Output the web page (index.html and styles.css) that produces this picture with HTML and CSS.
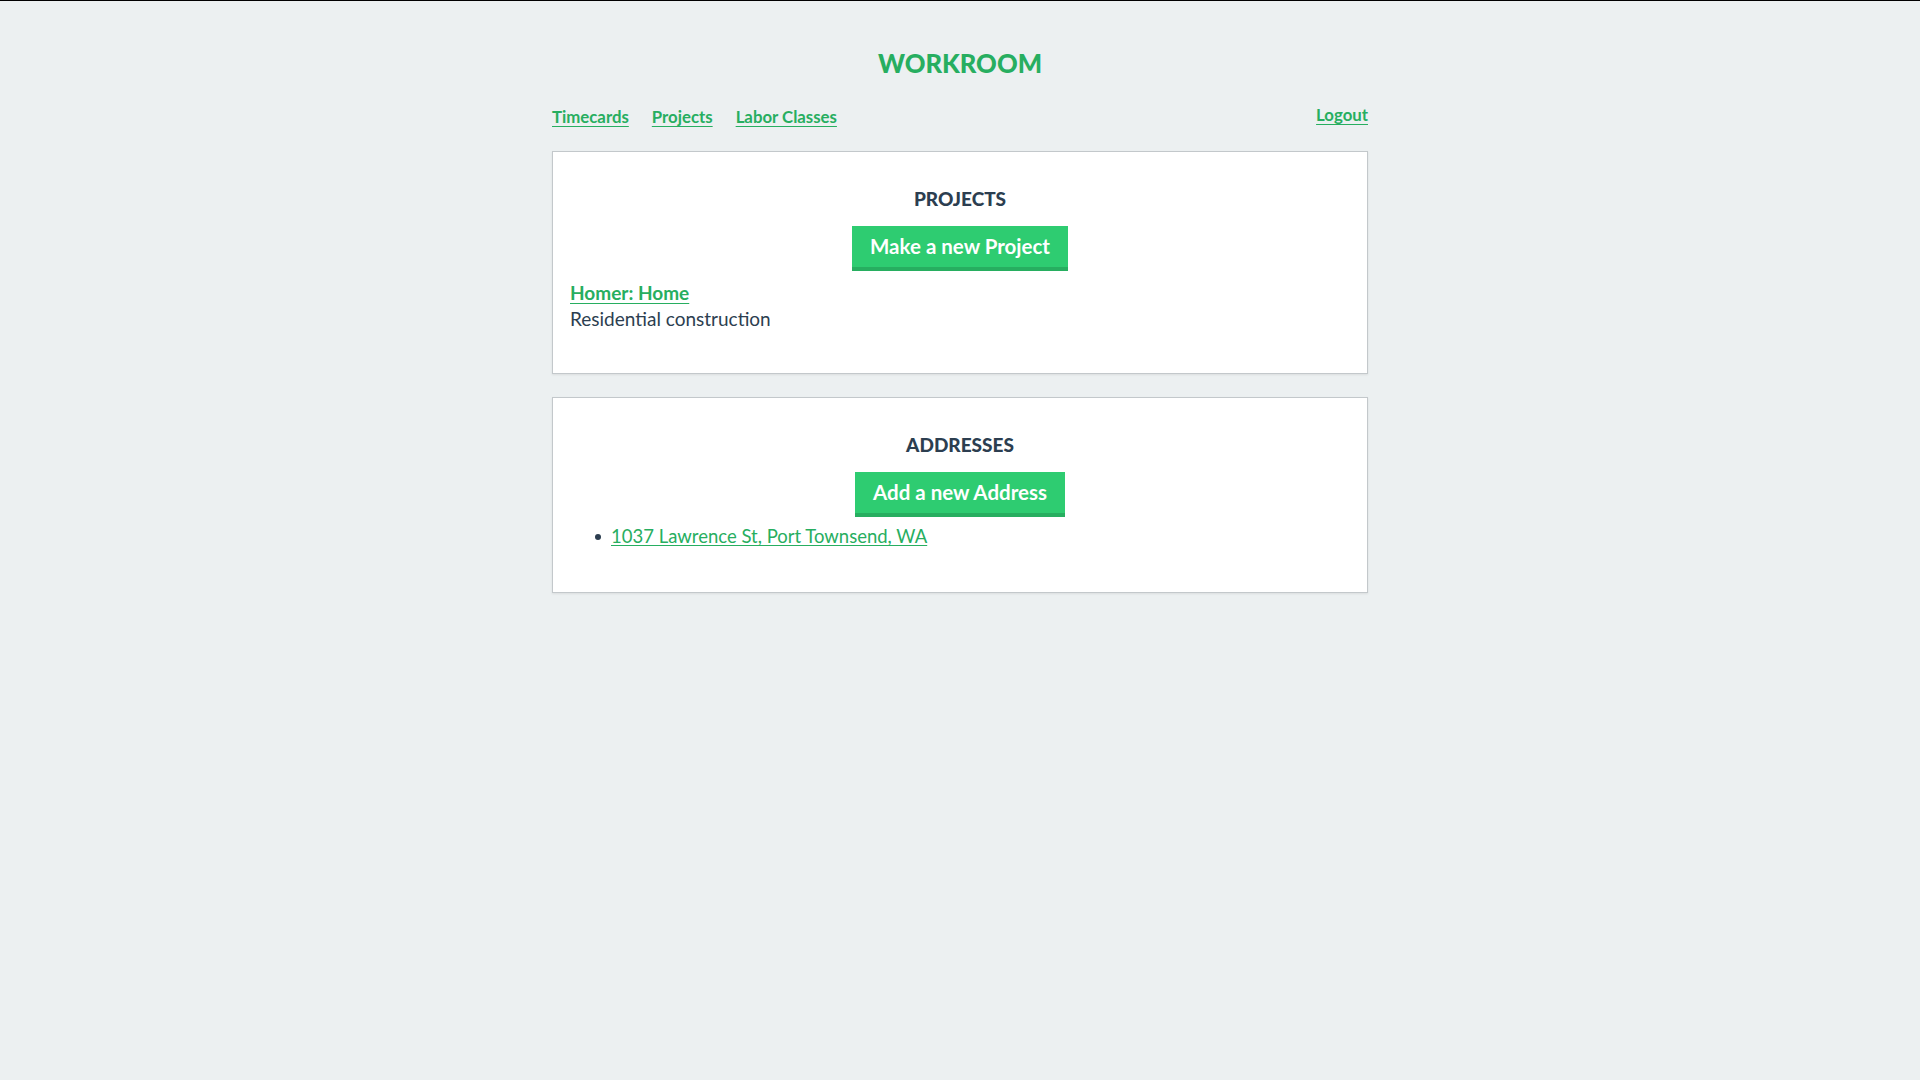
FILE: index.html
```html
<!DOCTYPE html>
<html lang="en">
<head>
<meta charset="utf-8">
<title>Workroom</title>
<link rel="stylesheet" href="styles.css">
</head>
<body>
<div class="container">
  <header class="header">
    <h1 class="brand">WORKROOM</h1>
    <nav class="nav">
      <div class="nav-left">
        <a class="nav-link" href="#">Timecards</a>
        <a class="nav-link" href="#">Projects</a>
        <a class="nav-link" href="#">Labor Classes</a>
      </div>
      <a class="nav-link logout" href="#">Logout</a>
    </nav>
  </header>
  <main class="main">
    <section class="card">
      <h2 class="card-title">PROJECTS</h2>
      <div class="actions"><a class="btn" href="#">Make a new Project</a></div>
      <div class="project">
        <a class="project-name" href="#">Homer: Home</a>
        <div class="project-desc">Residential construction</div>
      </div>
    </section>
    <section class="card">
      <h2 class="card-title">ADDRESSES</h2>
      <div class="actions"><a class="btn" href="#">Add a new Address</a></div>
      <ul class="address-list">
        <li class="address-item"><a class="address-link" href="#">1037 Lawrence St, Port Townsend, WA</a></li>
      </ul>
    </section>
  </main>
</div>
</body>
</html>
```
FILE: styles.css
```css
html, body {
  margin: 0;
  padding: 0;
}
body {
  background: #ecf0f1;
  border-top: 1px solid #000;
  font-family: Lato, "Open Sans", sans-serif;
  color: #2c3e50;
  min-height: 1079px;
}
.container {
  width: 816px;
  margin: 0 auto;
}
.header {
  padding-top: 46px;
}
.brand {
  margin: 0;
  font-size: 25.6px;
  line-height: 32px;
  font-weight: 900;
  text-align: center;
  color: #27ae60;
}
.nav {
  margin-top: 26px;
  display: flex;
  justify-content: space-between;
  align-items: flex-end;
}
.nav-left {
  display: flex;
  gap: 23px;
}
.nav-link {
  font-size: 16.8px;
  line-height: 20px;
  font-weight: 700;
  color: #27ae60;
  text-decoration: underline;
  text-underline-offset: 3px;
}
.logout {
  margin-bottom: 2px;
}
.main {
  margin-top: 24px;
  display: flex;
  flex-direction: column;
  gap: 23px;
}
.card {
  background: #fff;
  border: 1px solid #c3c8cb;
  box-shadow: 0 1px 2px rgba(0, 0, 0, 0.08);
  padding: 20px 17px;
}
.card-title {
  margin: 16px 0 0;
  font-size: 19px;
  line-height: 22px;
  font-weight: 900;
  text-align: center;
  color: #2c3e50;
}
.actions {
  margin-top: 16px;
  display: flex;
  justify-content: center;
}
.btn {
  display: block;
  background: #2ecc71;
  border-bottom: 4px solid #27ae60;
  color: #fff;
  font-size: 20.5px;
  line-height: 41px;
  font-weight: 700;
  padding: 0 18px;
  text-decoration: none;
}
.project {
  margin: 9px 0 22px;
  font-size: 19px;
  line-height: 25.6px;
}
.project-name {
  font-weight: 700;
  color: #27ae60;
  text-decoration: underline;
  text-underline-offset: 3px;
}
.project-desc {
  color: #2c3e50;
}
.address-list {
  margin: 7px 0 22px;
  padding-left: 25px;
  list-style: none;
  font-size: 18.5px;
  line-height: 25.6px;
}
.address-item {
  display: flex;
  align-items: center;
  gap: 10px;
}
.address-item::before {
  content: "";
  width: 6px;
  height: 6px;
  border-radius: 50%;
  background: #2c3e50;
  flex: none;
}
.address-link {
  color: #27ae60;
  text-decoration: underline;
  text-underline-offset: 2px;
}
```
